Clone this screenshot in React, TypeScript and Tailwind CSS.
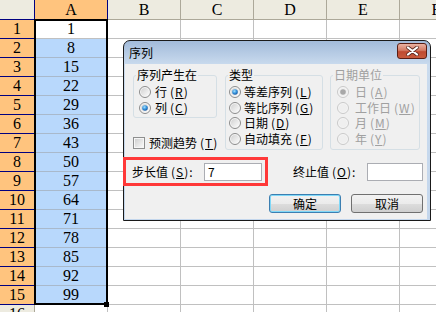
import React from "react";

const COLS = ["A", "B", "C", "D", "E", "F"];
const VALUES = Array.from({ length: 15 }, (_, i) => 1 + i * 7);

function Sheet() {
  const rows = Array.from({ length: 16 }, (_, i) => i + 1);
  return (
    <div className="grid grid-cols-[35px_repeat(6,73px)] font-['Liberation_Serif',serif] text-[16px] leading-none text-black">
      {/* header row */}
      <div className="h-[20px] border-r border-b border-[#000080] bg-[#edebe0]" />
      {COLS.map((c) =>
        c === "A" ? (
          <div
            key={c}
            className="flex h-[20px] items-center justify-center border-r border-b border-[#000080] bg-[#ffc47e]"
          >
            {c}
          </div>
        ) : (
          <div
            key={c}
            className="flex h-[20px] items-center justify-center border-r border-b border-[#aca899] bg-[#edebe0]"
          >
            {c}
          </div>
        )
      )}

      {rows.map((r) => (
        <React.Fragment key={r}>
          {/* row header */}
          {r <= 15 ? (
            <div className="flex h-[19px] items-center justify-center border-r border-b border-[#000080] bg-[#ffc47e]">
              {r}
            </div>
          ) : (
            <div className="flex h-[19px] items-center justify-center border-r border-b border-[#aca899] bg-[#edebe0]">
              {r}
            </div>
          )}

          {/* column A */}
          {r === 1 || r > 15 ? (
            <div className="flex h-[19px] items-center justify-center border-r border-b border-[#c0c0c0] bg-white">
              {r === 1 ? VALUES[0] : ""}
            </div>
          ) : (
            <div className="flex h-[19px] items-center justify-center border-r border-b border-[#a9b9cb] bg-[#b8d8fc]">
              {VALUES[r - 1]}
            </div>
          )}

          {/* B..F */}
          {COLS.slice(1).map((c) => (
            <div key={c} className="h-[19px] border-r border-b border-[#c0c0c0] bg-white" />
          ))}
        </React.Fragment>
      ))}
    </div>
  );
}

function Radio({ checked = false, disabled = false }: { checked?: boolean; disabled?: boolean }) {
  return (
    <svg width="12" height="12" viewBox="0 0 12 12" className="shrink-0">
      <defs>
        <linearGradient id="radioFace" x1="0" y1="0" x2="1" y2="1">
          <stop offset="0" stopColor="#d2d2d2" />
          <stop offset="1" stopColor="#fbfbfb" />
        </linearGradient>
        <radialGradient id="radioDot" cx="0.4" cy="0.35" r="0.7">
          <stop offset="0" stopColor="#a8e0fc" />
          <stop offset="0.5" stopColor="#3a98df" />
          <stop offset="1" stopColor="#12509c" />
        </radialGradient>
      </defs>
      <circle cx="6" cy="6" r="5.5" fill="#f6f6f6" stroke={disabled ? "#c9c9c9" : "#8c8c8c"} />
      <circle cx="6" cy="6" r="4" fill={disabled ? "#efefef" : "url(#radioFace)"} />
      {checked && <circle cx="6" cy="6" r="2.8" fill={disabled ? "#a8a8a8" : "url(#radioDot)"} />}
    </svg>
  );
}

function Checkbox() {
  return (
    <svg width="12" height="12" viewBox="0 0 12 12" className="shrink-0">
      <defs>
        <linearGradient id="checkFace" x1="0" y1="0" x2="1" y2="1">
          <stop offset="0" stopColor="#d0d0d0" />
          <stop offset="1" stopColor="#f8f8f8" />
        </linearGradient>
      </defs>
      <rect x="0.5" y="0.5" width="11" height="11" fill="#f6f6f6" stroke="#8e8f8f" />
      <rect x="2" y="2" width="8" height="8" fill="url(#checkFace)" />
    </svg>
  );
}

// access key in half-width brackets, e.g. 行 (R)
function Key({ k }: { k: string }) {
  return (
    <span className="ml-[3px] tracking-[1px]">
      (<span className="underline">{k}</span>)
    </span>
  );
}

function Label({ text, k }: { text: string; k: string }) {
  return (
    <span className="whitespace-nowrap">
      {text}
      <Key k={k} />
    </span>
  );
}

function Group({
  label,
  disabled = false,
  className,
  children,
}: {
  label: string;
  disabled?: boolean;
  className: string;
  children: React.ReactNode;
}) {
  return (
    <div className={`relative rounded-[3px] border border-[#d5dfe5] ${className}`}>
      <span
        className={`absolute -top-[9px] left-[2px] bg-[#f0f0f0] px-[1px] leading-[16px] ${
          disabled ? "text-[#a0a0a0]" : "text-black"
        }`}
      >
        {label}
      </span>
      {children}
    </div>
  );
}

function SeriesDialog() {
  return (
    <div className="absolute left-[123px] top-[40px] flex h-[181px] w-[308px] flex-col overflow-hidden rounded-t-[7px] border border-[#1a1a1a] bg-[linear-gradient(to_bottom,#a2bbda_0px,#cadbee_24px,#c3d6ec_100%)] font-['Noto_Sans_CJK_SC',sans-serif] text-[12px] text-black">
      {/* title bar */}
      <div className="flex h-[23px] shrink-0 items-center justify-between pl-[5px] pr-[3px]">
        <span className="leading-none">序列</span>
        <div className="mt-[2px] flex h-[16px] w-[30px] items-center justify-center self-start rounded-[3px] border border-[#5a1e14] bg-[linear-gradient(to_bottom,#eab3a4_0%,#d47b64_45%,#bf4a30_55%,#c85a3c_100%)]">
          <svg width="13" height="10" viewBox="0 0 13 10">
            <path d="M2 1.5 L11 8.5 M11 1.5 L2 8.5" stroke="#5b2a22" strokeWidth="3.6" strokeLinecap="round" />
            <path d="M2 1.5 L11 8.5 M11 1.5 L2 8.5" stroke="#ffffff" strokeWidth="2.2" strokeLinecap="round" />
          </svg>
        </div>
      </div>

      {/* client area */}
      <div className="mb-[1px] ml-[1px] mr-[3px] flex-1 bg-[#f0f0f0] pl-[8px]">
        <div className="mt-[11px] flex items-start">
          <div className="flex w-[84px] flex-col">
            <Group label="序列产生在" className="h-[43px] w-[84px] pl-[5px] pt-[8px]">
              <div className="flex h-[16px] items-center gap-[4px]">
                <Radio />
                <Label text="行" k="R" />
              </div>
              <div className="flex h-[16px] items-center gap-[4px]">
                <Radio checked />
                <Label text="列" k="C" />
              </div>
            </Group>
            <div className="mt-[17px] flex h-[16px] items-center gap-[4px]">
              <Checkbox />
              <Label text="预测趋势" k="T" />
            </div>
          </div>

          <Group label="类型" className="ml-[8px] h-[75px] w-[98px] pl-[3px] pt-[8px]">
            <div className="flex h-[15.7px] items-center gap-[3px]">
              <Radio checked />
              <Label text="等差序列" k="L" />
            </div>
            <div className="flex h-[15.7px] items-center gap-[3px]">
              <Radio />
              <Label text="等比序列" k="G" />
            </div>
            <div className="flex h-[15.7px] items-center gap-[3px]">
              <Radio />
              <Label text="日期" k="D" />
            </div>
            <div className="flex h-[15.7px] items-center gap-[3px]">
              <Radio />
              <Label text="自动填充" k="F" />
            </div>
          </Group>

          <Group label="日期单位" disabled className="ml-[7px] h-[75px] w-[90px] pl-[6px] pt-[8px] text-[#a0a0a0]">
            <div className="flex h-[15.7px] items-center gap-[6px]">
              <Radio checked disabled />
              <Label text="日" k="A" />
            </div>
            <div className="flex h-[15.7px] items-center gap-[6px]">
              <Radio disabled />
              <Label text="工作日" k="W" />
            </div>
            <div className="flex h-[15.7px] items-center gap-[6px]">
              <Radio disabled />
              <Label text="月" k="M" />
            </div>
            <div className="flex h-[15.7px] items-center gap-[6px]">
              <Radio disabled />
              <Label text="年" k="Y" />
            </div>
          </Group>
        </div>

        {/* step / stop values */}
        <div className="mt-[12px] flex h-[18px] items-center">
          <span className="-ml-[1px] w-[72px] whitespace-nowrap">
            步长值<Key k="S" />:
          </span>
          <div className="flex h-[18px] w-[58px] items-center border border-[#abadb3] bg-white pl-[3px]">7</div>
          <span className="ml-[31px] w-[74px] whitespace-nowrap">
            终止值<Key k="O" />:
          </span>
          <div className="h-[18px] w-[56px] border border-[#abadb3] bg-white" />
        </div>

        {/* buttons */}
        <div className="mt-[13px] flex justify-end gap-[10px] pr-[4px]">
          <button className="flex h-[19px] w-[72px] items-center justify-center rounded-[3px] border border-[#3c7fb1] bg-[linear-gradient(to_bottom,#f2f2f2_0%,#ebebeb_50%,#dddddd_50%,#cfcfcf_100%)] leading-none shadow-[inset_0_0_0_1px_#7fd8f8]">
            确定
          </button>
          <button className="flex h-[19px] w-[72px] items-center justify-center rounded-[3px] border border-[#707070] bg-[linear-gradient(to_bottom,#f2f2f2_0%,#ebebeb_50%,#dddddd_50%,#cfcfcf_100%)] leading-none">
            取消
          </button>
        </div>
      </div>
    </div>
  );
}

export default function App() {
  return (
    <div className="relative h-[312px] w-[436px] overflow-hidden bg-white">
      <Sheet />

      {/* selection border around A1:A15 */}
      <div className="absolute left-[34px] top-[19px] h-[286px] w-[74px] border-2 border-black" />
      <div className="absolute left-[104px] top-[302px] h-[5px] w-[5px] bg-black" />

      <SeriesDialog />

      {/* red highlight box */}
      <div className="absolute left-[123px] top-[157px] h-[29px] w-[145px] border-[3px] border-[#ff3838]" />
    </div>
  );
}
